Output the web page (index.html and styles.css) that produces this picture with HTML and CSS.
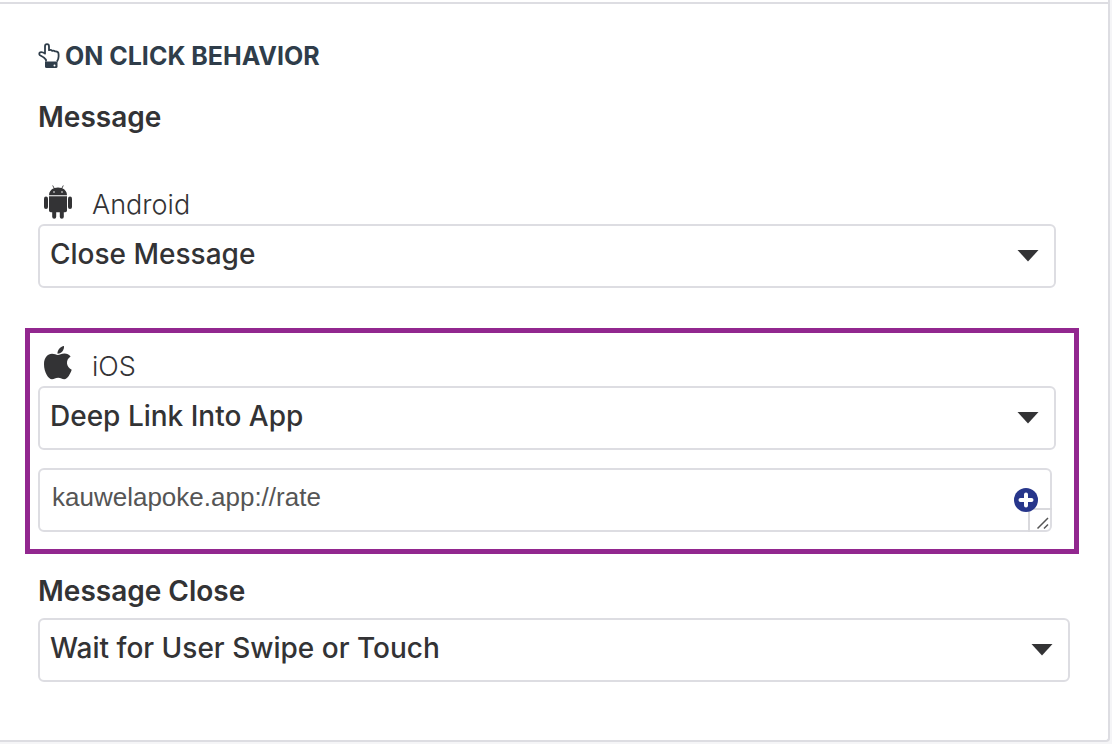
FILE: index.html
```html
<!DOCTYPE html>
<html lang="en">
<head>
<meta charset="utf-8">
<title>On Click Behavior</title>
<link rel="stylesheet" href="styles.css">
</head>
<body>
<main class="page">
<section class="panel">
  <h2 class="panel-title">
    <svg class="icon-hand" viewBox="0 0 22 26" aria-hidden="true">
      <path d="M8 18.500V16.800C6.500 14.500 4.500 13.500 2 12.300C1 11.500 1 9.800 2.200 9.300C4 8.800 5.500 9.500 7 10.600V3.500Q7 1.200 9 1.200Q11 1.200 11 3.500V7.200Q12.800 6.400 14.200 7.800Q15.800 7.200 17 8.400Q20.600 8 20.600 11.500V13.500Q20.600 16 19 18.500" fill="none" stroke="currentColor" stroke-width="1.800" stroke-linejoin="round"/>
      <path d="M7 18.500H19.500V23.500Q19.500 25 18 25H8.500Q7 25 7 23.500Z" fill="currentColor"/>
      <circle cx="16.500" cy="22.500" r="1" fill="#fff"/>
    </svg>
    ON CLICK BEHAVIOR
  </h2>

  <h3 class="group-title group-title-first">Message</h3>

  <div class="field field-android">
    <label class="platform" for="android-action">
      <svg class="icon-platform" viewBox="0 0 30 34" aria-hidden="true">
        <g fill="currentColor">
          <path d="M6 10.300C6 6.800 8 4.500 10.800 3.300L9.300.700L9.900.300L11.500 3Q15 1.800 18.500 3L20.100.300L20.700.700L19.200 3.300C22 4.500 24 6.800 24 10.300Z"/>
          <path d="M6 11.300H24V25.500Q24 27.300 22.200 27.300H20.800V31.800Q20.800 33.800 18.800 33.800Q16.800 33.800 16.800 31.800V27.300H13.200V31.800Q13.200 33.800 11.200 33.800Q9.200 33.800 9.200 31.800V27.300H7.800Q6 27.300 6 25.500Z"/>
          <rect x="1" y="11.500" width="4" height="12.500" rx="2"/>
          <rect x="25" y="11.500" width="4" height="12.500" rx="2"/>
        </g>
        <circle cx="11" cy="7" r=".8" fill="#fff"/>
        <circle cx="19" cy="7" r=".8" fill="#fff"/>
      </svg>
      Android
    </label>
    <div class="select-box">
      <select id="android-action" class="control select">
        <option>Close Message</option>
        <option>Deep Link Into App</option>
      </select>
      <svg class="caret" viewBox="0 0 22 12" aria-hidden="true"><path d="M.500 0H21.500L11 11.500Z" fill="currentColor"/></svg>
    </div>
  </div>

  <div class="highlight">
    <label class="platform" for="ios-action">
      <svg class="icon-platform" viewBox="0 0 30 34" aria-hidden="true">
        <g fill="currentColor">
          <path d="M21 -1C21.400 2.500 18.700 6.600 14.500 6.800C14.100 3.200 17.200-.400 21-1Z"/>
          <path d="M14.800 8C16.500 8 18.500 6.500 21.500 6.500C24 6.500 26.200 7.600 27.600 9.600C22.200 12.800 23.100 20.500 28.700 22.700C27.500 26.300 24.500 32.300 21.300 32.300C19 32.300 18 30.700 15.200 30.700C12.300 30.700 11.200 32.300 9 32.300C5.500 32.300 1 25 1 17.200C1 10.500 4.800 6.800 9 6.800C11.500 6.800 13.300 8 14.800 8Z"/>
        </g>
      </svg>
      iOS
    </label>
    <div class="select-box">
      <select id="ios-action" class="control select">
        <option>Deep Link Into App</option>
        <option>Close Message</option>
      </select>
      <svg class="caret" viewBox="0 0 22 12" aria-hidden="true"><path d="M.500 0H21.500L11 11.500Z" fill="currentColor"/></svg>
    </div>
    <div class="link-box">
      <textarea class="control link-input" rows="1" aria-label="Deep link">kauwelapoke.app://rate</textarea>
      <svg class="grip" viewBox="0 0 24 24" aria-hidden="true">
        <path d="M1 24V1H24" fill="none" stroke="#d9d9dd" stroke-width="2"/>
        <path d="M9.500 20.500L20 10M16 20.500L20 16.500" fill="none" stroke="#555" stroke-width="1.500"/>
      </svg>
      <button class="add" type="button" aria-label="Add attribute">
        <svg class="add-icon" viewBox="0 0 24 24" aria-hidden="true">
          <circle cx="12" cy="12" r="12" fill="#27368b"/>
          <path d="M12 6.500V17.500M6.500 12H17.500" stroke="#fff" stroke-width="4" stroke-linecap="round"/>
        </svg>
      </button>
    </div>
  </div>

  <label class="group-title group-title-close" for="message-close">Message Close</label>
  <div class="select-box">
    <select id="message-close" class="control select">
      <option>Wait for User Swipe or Touch</option>
      <option>Auto-Dismiss</option>
    </select>
    <svg class="caret" viewBox="0 0 22 12" aria-hidden="true"><path d="M.500 0H21.500L11 11.500Z" fill="currentColor"/></svg>
  </div>
</section>
</main>
</body>
</html>
```

FILE: styles.css
```css
* {
  box-sizing: border-box;
}

body {
  margin: 0;
  background: #f5f5f7;
  color: #333335;
  font-family: Inter, "Open Sans", sans-serif;
}

.page {
  padding: 0 2px 2px 0;
}

.panel {
  padding: 40px 38px 58px;
  background: linear-gradient(#dddde2, #dddde2) 0 2px / 100% 2px no-repeat #fff;
  border: solid #dddde2;
  border-width: 0 2px 2px 0;
  border-bottom-right-radius: 4px;
}

.panel-title {
  display: flex;
  align-items: center;
  gap: 5px;
  margin: 0;
  color: #2f3d4a;
  font-size: 25px;
  font-weight: 700;
  line-height: 32px;
}

.icon-hand {
  width: 22px;
  height: 26px;
}

.group-title {
  display: block;
  margin: 0;
  font-size: 28px;
  font-weight: 600;
  line-height: 32px;
}

.group-title-first {
  margin: 29px 0 51px;
}

.group-title-close {
  margin: 21px 0 11px;
}

.field-android {
  margin-right: 14px;
}

.platform {
  display: flex;
  gap: 19px;
  height: 40px;
  padding: 1px 5px 0;
  font-size: 27px;
  font-weight: 300;
  line-height: 40px;
}

.icon-platform {
  width: 30px;
  height: 34px;
  overflow: visible;
}

.select-box,
.link-box {
  display: grid;
  align-items: center;
}

.select-box > *,
.link-box > * {
  grid-area: 1 / 1;
}

.control {
  width: 100%;
  height: 64px;
  margin: 0;
  border: 2px solid #dddde2;
  border-radius: 6px;
  background: #fff;
}

.select {
  appearance: none;
  padding: 0 48px 4px 10px;
  color: inherit;
  font: 500 28px/36px Inter, "Open Sans", sans-serif;
}

.caret {
  justify-self: end;
  width: 22px;
  height: 12px;
  margin-right: 17px;
  pointer-events: none;
}

.highlight {
  margin: 40px -9px 0 -13px;
  padding: 13px 18px 17px 8px;
  border: 5px solid #92278f;
}

.link-box {
  margin: 18px 4px 0 0;
}

.link-input {
  display: block;
  padding: 11px 48px 13px 12px;
  overflow: hidden;
  resize: none;
  color: #555;
  font: 26px/32px "Liberation Sans", Arial, sans-serif;
}

.grip {
  place-self: end;
  width: 24px;
  height: 24px;
  pointer-events: none;
}

.add {
  justify-self: end;
  width: 24px;
  height: 24px;
  margin-right: 14px;
  padding: 0;
  border: 0;
  background: none;
}

.add-icon {
  display: block;
  width: 24px;
  height: 24px;
}
```
